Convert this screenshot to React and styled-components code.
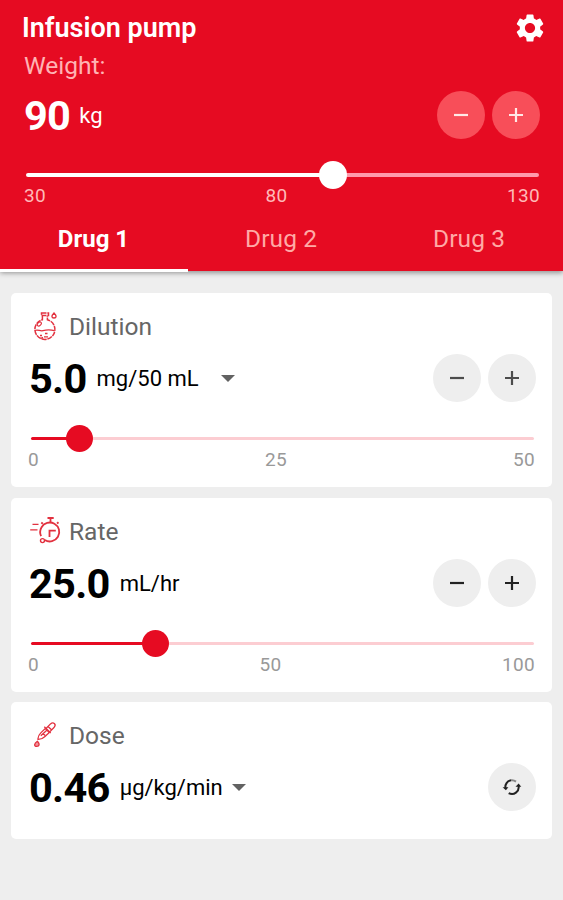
import React from "react";
import styled, { createGlobalStyle } from "styled-components";
import { MdSettings } from "react-icons/md";

const GlobalStyle = createGlobalStyle`
  * {
    box-sizing: border-box;
  }
  body {
    margin: 0;
    background-color: #eeeeee;
    font-family: Roboto, "Liberation Sans", sans-serif;
  }
  button {
    border: 0;
    padding: 0;
    font: inherit;
    cursor: pointer;
  }
`;

const Page = styled.div`
  width: 100%;
  min-height: 900px;
  background-color: #eeeeee;
`;

const Header = styled.header`
  height: 271px;
  display: flex;
  flex-direction: column;
  background-color: #e60b22;
  color: #fff;
  box-shadow: 0 2px 5px rgba(0, 0, 0, 0.38);
`;

const TitleBar = styled.div`
  height: 55px;
  padding: 0 16px 0 22px;
  display: flex;
  align-items: center;
  justify-content: space-between;

  h1 {
    margin: 0;
    font-size: 27px;
    font-weight: 600;
    letter-spacing: 0;
  }

  button {
    display: flex;
    color: #fff;
    background-color: transparent;
  }
`;

const HeaderBody = styled.div`
  padding: 0 23px 0 24px;
`;

const WeightLabel = styled.div`
  height: 24px;
  line-height: 22px;
  font-size: 24.5px;
  color: #ffb3b4;
`;

const ValueRow = styled.div`
  height: 48px;
  margin-top: ${({ $top }) => $top || 0}px;
  display: flex;
  align-items: center;
`;

const Value = styled.span`
  font-size: 41.5px;
  font-weight: 700;
  letter-spacing: -0.7px;
`;

const Unit = styled.span`
  margin-left: ${({ $left }) => $left}px;
  font-size: 22px;
`;

const Caret = styled.span`
  margin-left: ${({ $left }) => $left}px;
  border-left: 7px solid transparent;
  border-right: 7px solid transparent;
  border-top: 7px solid #626262;
`;

const Buttons = styled.div`
  margin-left: auto;
  display: flex;
  gap: 7px;
`;

const RoundButton = styled.button`
  width: 48px;
  height: 48px;
  border-radius: 50%;
  display: grid;
  place-items: center;
  background-color: ${({ $light }) => ($light ? "#f84e59" : "#eeeeee")};
  color: ${({ $light, $dark }) => ($light ? "#ffe9e6" : $dark ? "#222" : "#4c4c4c")};
`;

const Track = styled.div`
  height: 28px;
  margin: ${({ $margin }) => $margin};
  display: flex;
  align-items: center;
`;

const Filled = styled.div`
  height: ${({ $size }) => $size}px;
  border-radius: 2px 0 0 2px;
  background-color: ${({ $color }) => $color};
`;

const Rest = styled.div`
  flex: 1;
  height: ${({ $size }) => $size}px;
  border-radius: 0 2px 2px 0;
  background-color: ${({ $color }) => $color};
`;

const Thumb = styled.div`
  width: ${({ $size }) => $size}px;
  height: ${({ $size }) => $size}px;
  margin: 0 -${({ $size }) => $size / 2}px;
  flex-shrink: 0;
  border-radius: 50%;
  z-index: 1;
  background-color: ${({ $color }) => $color};
`;

const Scale = styled.div`
  height: 20px;
  margin: ${({ $margin }) => $margin};
  line-height: 20px;
  display: flex;
  justify-content: space-between;
  font-size: 19px;
  letter-spacing: 0.3px;
  color: ${({ $color }) => $color};
`;

const Tabs = styled.nav`
  height: 65px;
  margin-top: auto;
  display: grid;
  grid-template-columns: 187px 188px 1fr;
`;

const Tab = styled.button`
  position: relative;
  background-color: transparent;
  font-size: ${({ $active }) => ($active ? 24 : 24.5)}px;
  font-weight: ${({ $active }) => ($active ? 700 : 400)};
  letter-spacing: ${({ $active }) => ($active ? 0 : 0.1)}px;
  color: ${({ $active }) => ($active ? "#fff" : "#ffaaa6")};

  &::after {
    content: "";
    display: ${({ $active }) => ($active ? "block" : "none")};
    position: absolute;
    inset: auto -1px -1px 0;
    height: 3px;
    background-color: #fff;
  }
`;

const CardList = styled.main`
  padding: 22px 11px 0;
  display: flex;
  flex-direction: column;
`;

const Card = styled.section`
  height: ${({ $height }) => $height}px;
  margin-bottom: ${({ $gap }) => $gap || 0}px;
  padding: 17px 16px 0 18px;
  border-radius: 5px;
  background-color: #fff;
`;

const CardTitle = styled.h2`
  margin: 0 0 12px;
  height: 32px;
  display: flex;
  align-items: center;
  gap: 8px;
  font-size: 24.5px;
  font-weight: 400;
  color: #666;

  svg {
    flex-shrink: 0;
    fill: none;
    stroke: #e2313f;
    stroke-width: 1.5;
  }
`;

const MinusIcon = () => (
  <svg width="16" height="16" viewBox="0 0 16 16" fill="none" stroke="currentColor" strokeWidth="2.2">
    <path d="M1 8h14" />
  </svg>
);

const PlusIcon = () => (
  <svg width="16" height="16" viewBox="0 0 16 16" fill="none" stroke="currentColor" strokeWidth="2.2">
    <path d="M1 8h14M8 1v14" />
  </svg>
);

const FlaskIcon = () => (
  <svg width="32" height="32" viewBox="0 0 32 32">
    <path d="M12.5 3h7v2.6h-7zM13.4 6v3.7a10 10 0 1 0 5 0V6" strokeDasharray="5 0.8" />
    <path d="M6 20.5c3-1.4 5 1 8 .2s6-1.4 11.5 0" strokeWidth="1.2" />
    <ellipse cx="10.3" cy="14" rx="2.4" ry="1.6" transform="rotate(-45 10.3 14)" strokeWidth="1.1" />
    <path d="M25 3c3 3 2.5 5 0 5s-3-2 0-5z" strokeWidth="1.3" />
    <path d="M11 25.5h2M16 23.5h2.5M15 26.8h4M12 28.3l2-1" strokeWidth="1.3" />
  </svg>
);

const StopwatchIcon = () => (
  <svg width="32" height="32" viewBox="0 0 32 32">
    <path d="M12.4 12.5a9.5 9.5 0 1 1 3.4 12.6M12.4 12.5a9.5 9.5 0 0 0-.3 8.7" strokeWidth="1.8" />
    <path d="M18.5 3h6.2M21.5 3v4M28 8.5l1.5-1.3M13.8 8.8l-1.5-1.3" strokeWidth="1.8" />
    <path d="M20.5 22v-6.3h6.3" strokeWidth="1.8" />
    <circle cx="13.5" cy="25.6" r="2" strokeWidth="1.4" />
    <path d="M3.5 9.3h6M1.2 14.8h7.3" strokeWidth="1.3" />
  </svg>
);

const DropperIcon = () => (
  <svg width="32" height="32" viewBox="0 0 32 32">
    <g strokeWidth="1.3">
      <path d="M9 19.5c.2-2.5 1.2-4 2.8-5.6l4.4-4.3 4.1 3.9-4.6 4.2c-2 1.8-3.5 2.8-6.7 2.7z" />
      <path d="M15.3 7.8l6.4 6.2M17.5 9l4-4.1c2.8-2.5 6.2.2 3.7 3.3L21 12.6M19 7.5l4 3.8M11.8 16.8l6-5.5M14 14.5l2.2 2" />
      <path d="M8.4 22.3c2.8 3 2 5-.7 5.1s-3-2.7.7-5.1z" fill="#f1929a" />
    </g>
  </svg>
);

const SyncIcon = () => (
  <svg width="20" height="18" viewBox="0 0 20 18" fill="none" stroke="#222" strokeWidth="2">
    <path d="M3.5 10.2A6.7 6.7 0 0 1 9 2.3" />
    <path d="M9 2.3a6.7 6.7 0 0 1 5 1.3" stroke="#888" />
    <path d="M16.5 7.8a6.7 6.7 0 0 1-9.8 7.3" />
    <path d="M.6 9.3h5.8l-2.5 3zM13.5 8.7h5.8l-2.7-3.2z" fill="#222" stroke="none" />
  </svg>
);

const Slider = ({ position, size, line, margin, color, restColor }) => (
  <Track $margin={margin}>
    <Filled $size={line} $color={color} style={{ width: `${position}%` }} />
    <Thumb $size={size} $color={color} />
    <Rest $size={line} $color={restColor} />
  </Track>
);

const Stepper = ({ light, dark }) => (
  <Buttons>
    <RoundButton $light={light} $dark={dark} aria-label="Decrease">
      <MinusIcon />
    </RoundButton>
    <RoundButton $light={light} $dark={dark} aria-label="Increase">
      <PlusIcon />
    </RoundButton>
  </Buttons>
);

const Marks = ({ values, color, margin = "-2px 1px 0 -1px" }) => (
  <Scale $color={color} $margin={margin}>
    {values.map((value) => (
      <span key={value}>{value}</span>
    ))}
  </Scale>
);

const App = () => {
  return (
    <Page>
      <GlobalStyle />
      <Header>
        <TitleBar>
          <h1>Infusion pump</h1>
          <button aria-label="Settings">
            <MdSettings size={34} />
          </button>
        </TitleBar>
        <HeaderBody>
          <WeightLabel>Weight:</WeightLabel>
          <ValueRow $top={12}>
            <Value>90</Value>
            <Unit $left={9}>kg</Unit>
            <Stepper light />
          </ValueRow>
          <Slider position={59.8} size={28} line={4} margin="22px 1px 0 2px" color="#fff" restColor="#ff9aac" />
          <Marks values={[30, 80, 130]} color="#ffb9b8" margin="-3px 0 0" />
        </HeaderBody>
        <Tabs>
          <Tab $active>Drug 1</Tab>
          <Tab>Drug 2</Tab>
          <Tab>Drug 3</Tab>
        </Tabs>
      </Header>
      <CardList>
        <Card $height={194} $gap={11}>
          <CardTitle>
            <FlaskIcon />
            Dilution
          </CardTitle>
          <ValueRow>
            <Value>5.0</Value>
            <Unit $left={10}>mg/50 mL</Unit>
            <Caret $left={22} />
            <Stepper />
          </ValueRow>
          <Slider position={9.7} size={27} line={3} margin="22px 2px 0 2px" color="#e60b22" restColor="#fccdd2" />
          <Marks values={[0, 25, 50]} color="#999" />
        </Card>
        <Card $height={194} $gap={10}>
          <CardTitle>
            <StopwatchIcon />
            Rate
          </CardTitle>
          <ValueRow>
            <Value>25.0</Value>
            <Unit $left={10}>mL/hr</Unit>
            <Stepper dark />
          </ValueRow>
          <Slider position={24.8} size={27} line={3} margin="22px 2px 0 2px" color="#e60b22" restColor="#fccdd2" />
          <Marks values={[0, 50, 100]} color="#999" />
        </Card>
        <Card $height={137}>
          <CardTitle>
            <DropperIcon />
            Dose
          </CardTitle>
          <ValueRow>
            <Value>0.46</Value>
            <Unit $left={10}>µg/kg/min</Unit>
            <Caret $left={9} />
            <Buttons>
              <RoundButton aria-label="Recalculate">
                <SyncIcon />
              </RoundButton>
            </Buttons>
          </ValueRow>
        </Card>
      </CardList>
    </Page>
  );
};

export default App;
